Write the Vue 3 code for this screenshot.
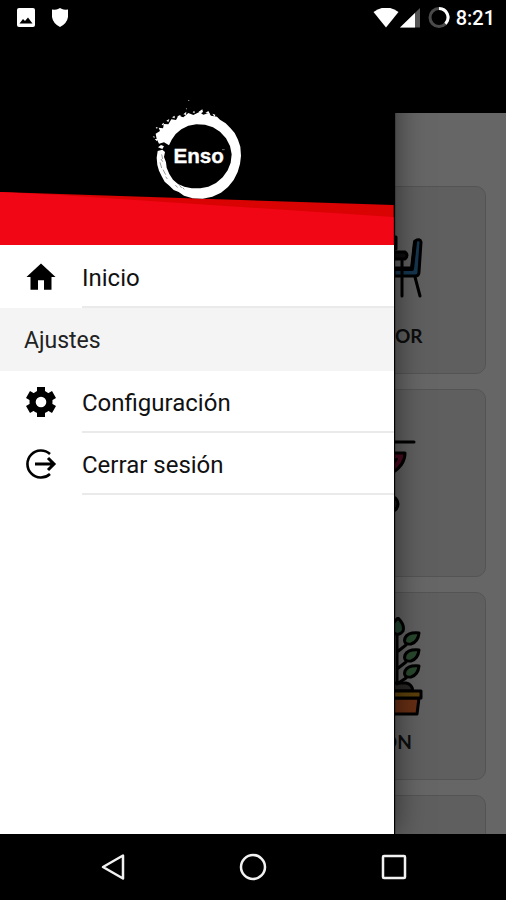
<script setup>
const rooms = [
  { id: 'comedor', label: 'COMEDOR' },
  { id: 'bar', label: '' },
  { id: 'balcon', label: 'BALCON' },
  { id: 'extra', label: '' },
]
</script>

<template>
  <div class="screen">
    <header class="status">
      <div class="status-side">
        <svg width="20" height="20" viewBox="0 0 20 20" aria-hidden="true">
          <rect x="1" y="0" width="18" height="19" rx="2" fill="#fff" />
          <path d="M3.5 15.5 L7 11 L9 13 L12 9.5 L16.500 15.500 Z" fill="#000" />
        </svg>
        <svg width="20" height="20" viewBox="0 0 20 20" aria-hidden="true">
          <path d="M10 0 L12 1 Q14 2 18 1.500 V9 Q17 15.500 10 19 Q3 15.500 2 9 V1.500 Q6 2 8 1 Z" fill="#fff" />
        </svg>
      </div>
      <div class="status-side status-right">
        <svg width="26" height="20" viewBox="0 0 26 20" aria-hidden="true">
          <path d="M.5 4 Q13 -5 25.500 4 L13 19.500 Z" fill="#fff" />
        </svg>
        <svg width="21" height="20" viewBox="0 0 21 20" aria-hidden="true">
          <path d="M0 19.500 L20 0 V19.500 Z" fill="#555" />
          <path d="M0 19.500 L15 5 V19.500 Z" fill="#fff" />
        </svg>
        <svg class="battery" width="22" height="22" viewBox="0 0 22 22" fill="none" stroke-width="3" aria-hidden="true">
          <circle cx="11" cy="10.500" r="9" stroke="#4a4a4a" />
          <path d="M11 1.500 A9 9 0 0 1 17.500 16.700" stroke="#fff" />
        </svg>
        <span class="clock">8:21</span>
      </div>
    </header>

    <div class="stage">
      <main class="page">
        <div class="page-bar"></div>
        <div class="rooms">
          <section v-for="room in rooms" :key="room.id" class="room">
            <svg v-if="room.id === 'comedor'" class="room-art" viewBox="0 0 100 100" fill="none" stroke="#000" stroke-width="3" stroke-linecap="round" stroke-linejoin="round" aria-hidden="true">
              <path d="M2 31 Q3 27 8 30 L11 57 H28 V65 H6 Z" fill="#3788c5" />
              <path d="M98 31 Q97 27 92 30 L89 57 H71 V65 H92 Q96 65 96 61 Z" fill="#3788c5" />
              <path d="M92 31 L89 58 H70" stroke-width="4" />
              <path d="M79 46 V85 M21 46 V85 M8 66 L3 85 M92 66 L97 85" />
              <path d="M20 41 H82 Q86 44 82 48 H17 Z" fill="#222" />
              <path d="M70 26 H73 V38 H70" fill="#333" />
            </svg>
            <svg v-else-if="room.id === 'bar'" class="room-art" viewBox="0 0 100 100" fill="none" stroke="#000" stroke-width="3" stroke-linecap="round" stroke-linejoin="round" aria-hidden="true">
              <path d="M8 28 H91" />
              <path d="M54 39 H82 Q82 51 69 59 Q58 54 54 39 Z" fill="#bb174f" />
              <path d="M65 47 L74 45 L70 51" stroke-width="2" />
              <circle cx="67" cy="90" r="8" fill="#555" />
            </svg>
            <svg v-else-if="room.id === 'balcon'" class="room-art" viewBox="0 0 100 100" fill="none" stroke="#000" stroke-width="3" stroke-linecap="round" stroke-linejoin="round" aria-hidden="true">
              <path d="M56 74 Q57 68 65 69 L70 66 H83 Q89 67 90 74 Z" fill="#65605a" />
              <path d="M74 18 V66 M74 35 L83 28 M74 52 L83 45 M74 67 L83 61" />
              <path d="M75 1 Q67 8 69 14 Q75 21 80 14 Q82 8 75 1 Z" fill="#54a775" />
              <path d="M96 16 Q85 15 82 21 Q80 28 88 27 Q95 25 96 16 Z M96 33 Q85 32 82 38 Q80 45 88 44 Q95 42 96 33 Z M96 49 Q85 48 82 54 Q80 61 88 60 Q95 58 96 49 Z" fill="#66b374" />
              <path d="M14 81 H96 L94 97 H17 Z" fill="#ff7434" />
              <path d="M11 74 H98 V81 H11 Z" fill="#e6a11c" />
            </svg>
            <h2 v-if="room.label" class="room-label">{{ room.label }}</h2>
          </section>
        </div>
      </main>
      <div class="scrim"></div>

      <aside class="drawer">
        <div class="brand">
          <svg class="band" viewBox="0 0 394 53" preserveAspectRatio="none" aria-hidden="true">
            <path d="M0 0 L394 13 V53 H0 Z" fill="#d90303" />
            <path d="M0 0 L60 3 L394 25 V53 H0 Z" fill="#f10616" />
          </svg>
          <svg class="logo" viewBox="-9 0 360 345" role="img" aria-label="Enso">
            <path
              fill="#fff"
              fill-rule="evenodd"
              d="M47 116 L60 108 L56 98 L69 100 L72 87 L85 88 L94 73 L108 75 L115 62 L130 67 L145 54 L160 60 L178 51 L190 59 L207 54 L213 62 L231 65 L240 74 L257 85 L271 99 L284 114 L294 134 L301 155 L303 182 L300 207 L293 231 L281 255 L264 276 L243 293 L217 305 L188 311 L158 310 L132 302 L116 291 L101 285 L88 272 L74 260 L65 244 L57 227 L52 210 L50 188 L53 168 L67 164 L75 171 L72 186 L78 202 L80 218 L88 237 L99 254 L113 266 L133 275 L155 280 L181 280 L205 275 L228 264 L248 247 L263 226 L272 203 L275 178 L270 153 L258 130 L240 110 L219 97 L195 89 L169 88 L145 92 L124 103 L107 117 L95 134 L87 151 L72 142 L57 146 L50 132 Z"
            />
            <path fill="#fff" d="M112 65 l8 -5 3 4 -7 4z M130 58 l9 -8 -1 10z M144 18 l3 -3 1 3z M176 50 l11 -7 2 8 -8 5z M196 54 l9 -6 5 9z M158 52 l5 -5 1 8z M79 77 l9 -5 -3 9z M96 67 l8 -5 0 8z M65 88 l7 -5 -2 9z M47 97 l6 0 -2 5z M38 125 l5 -1 1 5z M44 132 l8 0 -1 7z M217 56 l9 3 -2 7z M137 42 l3 -2 1 3z M54 157 l9 -7 9 4 -5 8z" />
            <path fill="none" stroke="#000" stroke-opacity=".6" stroke-width="2" d="M65 178 l3 14 M60 202 l5 17 M69 224 l8 15 M63 192 l5 8 M116 267 l9 12 M106 271 l7 6 M128 278 l5 5 M77 245 l5 7" />
            <text x="176" y="205" text-anchor="middle" class="logo-text">Enso</text>
            <path d="M246 164 h8" stroke="#aaa" stroke-width="2" />
          </svg>
        </div>

        <nav class="menu">
          <a href="#inicio" class="item">
            <svg class="icon" viewBox="0 0 24 24" aria-hidden="true">
              <path d="M10 20.500 v-6.300 h4 v6.300 h5 v-8.500 h2.700 L12 3 2.300 12 H5 v8.500z" />
            </svg>
            <span class="item-text">Inicio</span>
          </a>
          <h3 class="group">Ajustes</h3>
          <a href="#configuracion" class="item">
            <svg class="icon" viewBox="0 0 36 36" aria-hidden="true">
              <g stroke="#000" stroke-width="8">
                <path d="M18 3 V33 M5 10.500 L31 25.500 M5 25.500 L31 10.500" />
              </g>
              <circle cx="18" cy="18" r="11.500" />
              <circle cx="18" cy="18" r="5.300" fill="#fff" />
            </svg>
            <span class="item-text">Configuración</span>
          </a>
          <a href="#salir" class="item">
            <svg class="icon" viewBox="0 0 36 36" fill="none" stroke="#000" stroke-width="3" aria-hidden="true">
              <path d="M27 8 A13.500 13.500 0 1 0 27 28" stroke-width="2.600" />
              <path d="M12 18 H31 M25 12 L31 18 L25 24" />
            </svg>
            <span class="item-text">Cerrar sesión</span>
          </a>
        </nav>
      </aside>
    </div>

    <footer class="keys">
      <button type="button" aria-label="Atrás">
        <svg width="28" height="28" viewBox="0 0 28 28"><path d="M4 14 L24 2.500 V25.500 Z" /></svg>
      </button>
      <button type="button" aria-label="Inicio">
        <svg width="28" height="28" viewBox="0 0 28 28"><circle cx="14" cy="14" r="12" /></svg>
      </button>
      <button type="button" aria-label="Recientes">
        <svg width="28" height="28" viewBox="0 0 28 28"><rect x="4" y="3" width="22" height="22" rx="1" /></svg>
      </button>
    </footer>
  </div>
</template>

<style>
body {
  margin: 0;
  background: #000;
}
</style>

<style scoped>
.screen {
  display: flex;
  flex-direction: column;
  height: 100vh;
  background: #000;
  color: #000;
  font-family: Roboto, "Liberation Sans", sans-serif;
}
.status {
  display: flex;
  justify-content: space-between;
  align-items: center;
  height: 36px;
  padding: 0 11px 0 16px;
  color: #fff;
}
.status-side {
  display: flex;
  align-items: center;
  gap: 14px;
}
.status-right {
  gap: 1px;
}
.battery {
  margin: 0 5px 0 6px;
}
.clock {
  font-size: 20px;
  font-weight: 500;
  line-height: 24px;
}
.stage {
  position: relative;
  flex: 1;
  min-height: 0;
  overflow: hidden;
}
.page {
  background: #fff;
}
.page-bar {
  height: 77px;
  background: #000;
}
.rooms {
  display: grid;
  grid-template-columns: 1fr 1fr;
  gap: 15px;
  padding: 73px 20px;
}
.room {
  grid-column: 2;
  box-sizing: border-box;
  display: flex;
  flex-direction: column;
  align-items: center;
  gap: 15px;
  height: 188px;
  padding: 24px 0;
  border: 1px solid #d2d2d2;
  border-radius: 10px;
  background: #eee;
}
.room-art {
  width: 100px;
  height: 100px;
}
.room-label {
  margin: 0;
  color: #222;
  font-family: Lato, sans-serif;
  font-size: 19px;
  font-weight: 700;
  line-height: 20px;
}
.scrim {
  position: absolute;
  inset: 0;
  background: rgba(0, 0, 0, 0.6);
}
.drawer {
  position: absolute;
  top: 0;
  bottom: 0;
  left: 0;
  width: 77.8%;
  background: #fff;
  box-shadow: 1px 0 1px #000, 2px 0 28px rgba(0, 0, 0, 0.5);
}
.brand {
  position: relative;
  display: flex;
  justify-content: center;
  height: 209px;
  background: #000;
}
.band {
  position: absolute;
  left: 0;
  bottom: 0;
  width: 100%;
  height: 53px;
}
.logo {
  position: relative;
  width: 120px;
  height: 115px;
  margin-top: 59px;
}
.logo-text {
  fill: #fff;
  stroke: #fff;
  stroke-width: 1;
  font-family: "Liberation Sans", sans-serif;
  font-size: 62px;
  font-weight: 700;
}
.menu {
  padding-top: 1px;
}
.item {
  display: flex;
  align-items: center;
  gap: 23px;
  height: 62px;
  padding-left: 23px;
  color: #111;
  text-decoration: none;
}
.icon {
  width: 36px;
  height: 36px;
  flex: none;
}
.item-text {
  flex: 1;
  padding-top: 4px;
  border-bottom: 2px solid #eaeaea;
  font-size: 24px;
  line-height: 56px;
}
.group {
  margin: 0;
  padding: 3px 0 0 24px;
  background: #f4f4f4;
  color: #222;
  font-size: 23px;
  font-weight: 400;
  line-height: 60px;
}
.keys {
  display: grid;
  grid-template-columns: repeat(3, 1fr);
  height: 66px;
  padding: 0 43px;
}
.keys button {
  display: flex;
  align-items: center;
  justify-content: center;
  padding: 0;
  border: 0;
  background: none;
}
.keys svg {
  fill: none;
  stroke: #f2f2f2;
  stroke-width: 2.5;
  stroke-linejoin: round;
}
</style>
